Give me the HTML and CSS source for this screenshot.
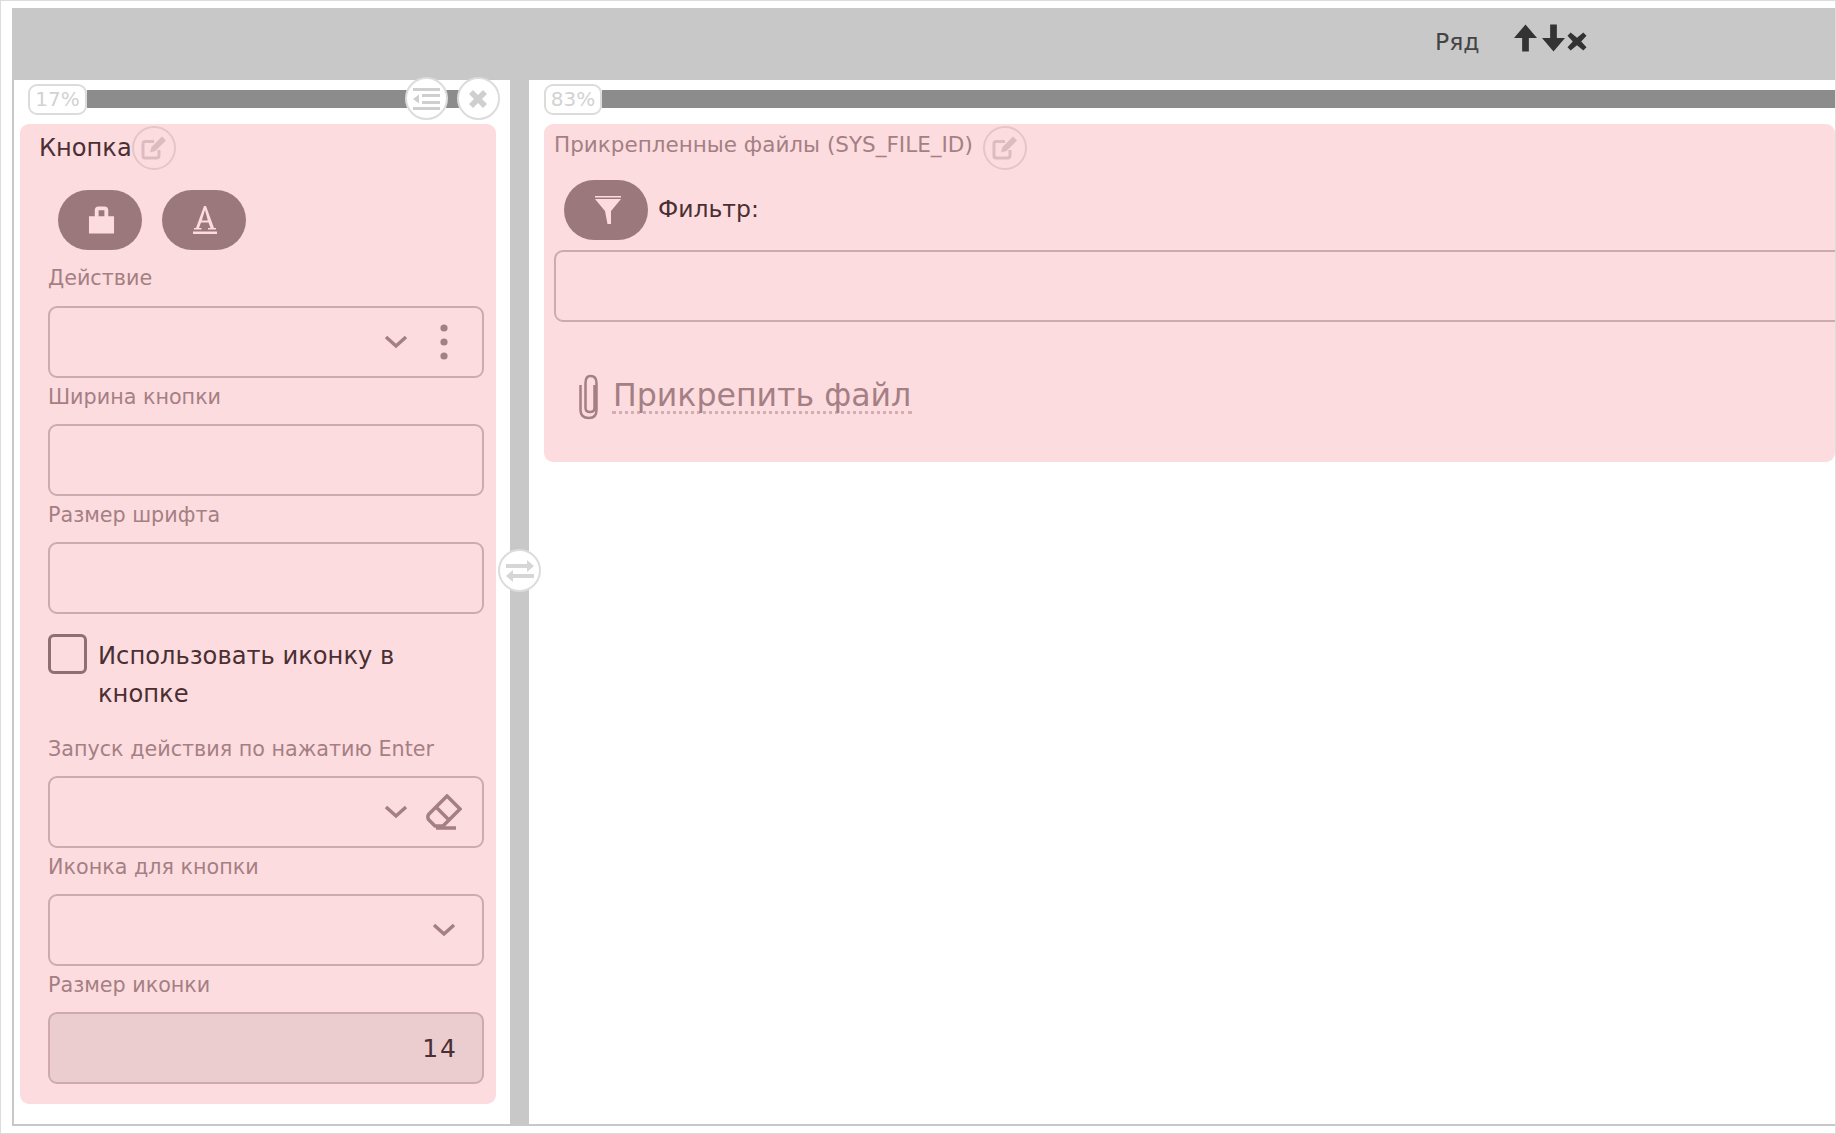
FILE: index.html
```html
<!DOCTYPE html>
<html lang="ru">
<head>
<meta charset="utf-8">
<title>Ряд</title>
<link rel="stylesheet" href="styles.css">
</head>
<body>
<div class="frame">
  <header class="rowbar">
    <span class="rowbar-label">Ряд</span>
    <span class="rowbar-icons">
      <svg class="ic-arrow" viewBox="0 0 24 28"><path d="M12 0L24 14H15.500V28H8.500V14H0Z"/></svg>
      <svg class="ic-arrow" viewBox="0 0 24 28"><path d="M8.500 0H15.500V14H24L12 28L0 14H8.500Z"/></svg>
      <svg class="ic-x" viewBox="0 0 22 18"><path d="M2 3.500L5 0.500L11 5.500L17 0.500L20 3.500L15 9L20 14.500L17 17.500L11 12.500L5 17.500L2 14.500L7 9Z"/></svg>
    </span>
  </header>
  <div class="columns">
    <section class="col col-left">
      <div class="track track-left">
        <span class="badge">17%</span>
        <span class="line"></span>
        <span class="round round-list">
          <svg viewBox="0 0 28 24"><path d="M1 1H28V4H1ZM10 7H28V10H10ZM10 14H28V17H10ZM1 20H28V23H1ZM7 7.500V16.500L1 12Z"/></svg>
        </span>
        <span class="round round-x">
          <svg viewBox="0 0 20 20"><path d="M1 5L5 1L10 6L15 1L19 5L14 10L19 15L15 19L10 14L5 19L1 15L6 10Z"/></svg>
        </span>
      </div>
      <div class="card card-left">
        <div class="title-row">
          <span class="title">Кнопка</span>
          <span class="edit"><svg viewBox="0 0 26 24"><path class="edit-box" d="M18 14V19.500Q18 22 15.500 22H4Q2 22 2 20V8Q2 5.500 4 5.500H13"/><path class="edit-pen" d="M21 0.500L25 4.500L14.500 15L9 16.500L10.500 11Z"/></svg></span>
        </div>
        <div class="btn-row">
          <span class="pill"><svg class="ic-lock" viewBox="0 0 28 28"><path fill-rule="evenodd" d="M1 10H7V4Q7 0 11 0H17Q21 0 21 4V10H27V28H1ZM11 4H17V10H11Z"/></svg></span>
          <span class="pill"><svg class="ic-a" viewBox="0 0 28 28"><path d="M13 0H15L23 22H25V23.500H17V22H19.500L17.500 16.500H10L8 22H10.500V23.500H3V22H5ZM14 4L10.800 14.500H16.800ZM2 25.500H26V28H2Z"/></svg></span>
        </div>
        <label class="lbl lbl-first">Действие</label>
        <div class="field">
          <svg class="chev chev-dots" viewBox="0 0 24 14"><path d="M2 2L12 11L22 2"/></svg>
          <svg class="dots" viewBox="0 0 8 36"><circle cx="4" cy="4" r="3.600"/><circle cx="4" cy="18" r="3.600"/><circle cx="4" cy="32" r="3.600"/></svg>
        </div>
        <label class="lbl">Ширина кнопки</label>
        <div class="field"></div>
        <label class="lbl">Размер шрифта</label>
        <div class="field"></div>
        <div class="check">
          <span class="box"></span>
          <span class="check-text">Использовать иконку в кнопке</span>
        </div>
        <label class="lbl">Запуск действия по нажатию Enter</label>
        <div class="field">
          <svg class="chev chev-eraser" viewBox="0 0 24 14"><path d="M2 2L12 11L22 2"/></svg>
          <svg class="eraser" viewBox="0 0 36 36"><path d="M21 2L34 15L17 32H9L2.500 25.500Q1 22 3 20ZM10 13L23 26M10 34H30"/></svg>
        </div>
        <label class="lbl">Иконка для кнопки</label>
        <div class="field">
          <svg class="chev chev-solo" viewBox="0 0 24 14"><path d="M2 2L12 11L22 2"/></svg>
        </div>
        <label class="lbl">Размер иконки</label>
        <div class="field field-filled"><span class="value">14</span></div>
      </div>
    </section>
    <div class="splitter">
      <span class="round round-swap">
        <svg viewBox="0 0 30 26"><path d="M1 6H22V2L29 8L22 14V10H1ZM29 16H8V12L1 18L8 24V20H29Z"/></svg>
      </span>
    </div>
    <section class="col col-right">
      <div class="track track-right">
        <span class="badge">83%</span>
        <span class="line"></span>
      </div>
      <div class="card card-right">
        <div class="title-row title-row-right">
          <span class="lbl-title">Прикрепленные файлы (SYS_FILE_ID)</span>
          <span class="edit"><svg viewBox="0 0 26 24"><path class="edit-box" d="M18 14V19.500Q18 22 15.500 22H4Q2 22 2 20V8Q2 5.500 4 5.500H13"/><path class="edit-pen" d="M21 0.500L25 4.500L14.500 15L9 16.500L10.500 11Z"/></svg></span>
        </div>
        <div class="filter-row">
          <span class="pill"><svg class="ic-funnel" viewBox="0 0 26 28"><path d="M0 0H26V1.500H0ZM0 3H26L16 15V28H12.500L10 15Z"/></svg></span>
          <span class="filter-label">Фильтр:</span>
        </div>
        <div class="field field-wide"></div>
        <div class="attach">
          <svg class="clip" viewBox="0 0 24 46"><path d="M17 11V34Q17 38 12.500 38Q8 38 8 34V9Q8 2 13 2Q19 2 19 9L19 36Q19 44 11.500 44Q3 44 3 36V11"/></svg>
          <span class="attach-text">Прикрепить файл</span>
        </div>
      </div>
    </section>
  </div>
</div>
</body>
</html>
```
FILE: styles.css
```css
* { box-sizing: border-box; }
html, body { margin: 0; padding: 0; background: #fff; }
body { font-family: "DejaVu Sans", sans-serif; }
.frame {
  width: 1836px; height: 1134px;
  border: 1px solid #dcdcdc;
  padding: 7px 0 7px 11px;
  display: flex; flex-direction: column;
  overflow: hidden;
}
.rowbar {
  height: 72px; flex: none;
  background: #c8c8c8;
  display: flex; align-items: flex-start;
  padding: 16px 0 0 1423px;
  color: #444;
}
.rowbar-label { font-size: 23.500px; line-height: 32px; width: 79px; padding-top: 2px; }
.rowbar-icons { display: flex; align-items: flex-start; gap: 5px; }
.ic-arrow { width: 23px; height: 28px; fill: #333; }
.ic-x { width: 24px; height: 19px; fill: #333; margin: 8px 0 0 -5px; }
.columns {
  flex: 1; display: flex; min-height: 0;
  border-left: 2px solid #c8c8c8;
  border-bottom: 2px solid #c8c8c8;
}
.col { position: relative; }
.col-left { width: 496px; flex: none; padding: 0 0 0 6px; }
.col-right { flex: 1; min-width: 0; padding: 0 0 0 15px; }
.splitter { width: 19px; flex: none; background: #c8c8c8; position: relative; }
.track { height: 44px; position: relative; display: flex; align-items: center; padding-bottom: 6px; }
.track-left { margin: 0 30px 0 8px; }
.badge {
  width: 59px; height: 31px; flex: none;
  background: #fff; border: 2px solid #dcdcdc; border-radius: 9px;
  color: #d2d2d2; font-size: 20px; line-height: 27px; text-align: center;
  position: relative; z-index: 1;
}
.track-right .badge { width: 58px; }
.line { height: 18px; background: #8c8c8c; flex: 1; }
.round {
  position: absolute; width: 43px; height: 43px;
  border-radius: 50%; background: #fff; border: 2px solid #dcdcdc;
  display: flex; align-items: center; justify-content: center;
}
.round svg { fill: #cfcfcf; }
.round-list { left: 376.500px; top: -3px; }
.round-list svg { width: 28px; height: 24px; }
.round-x { left: 428.500px; top: -3px; }
.round-x svg { width: 20px; height: 20px; }
.round-swap { left: -12px; top: 469px; }
.round-swap svg { width: 30px; height: 26px; fill: #d6d6d6; }
.card { background: #fddcdf; border-radius: 9px; }
.card-left { height: 980px; width: 476px; padding: 0 12px 0 28px; }
.card-right { height: 338px; padding: 0 0 0 10px; }
.title-row { display: flex; align-items: flex-start; height: 66px; margin-left: -9px; }
.title { font-size: 24.100px; line-height: 28px; padding-top: 10px; color: #4a2f33; height: 44px; }
.edit {
  width: 44px; height: 44px; flex: none; border-radius: 50%;
  border: 2px solid #e3c6c9; display: flex; align-items: center; justify-content: center;
  margin-top: 2px;
}
.edit svg { width: 26px; height: 24px; }
.edit-box { fill: none; stroke: #dcbcc0; stroke-width: 3; }
.edit-pen { fill: #dcbcc0; }
.btn-row { display: flex; gap: 20px; padding-left: 9.500px; height: 60px; }
.pill {
  width: 84px; height: 60px; flex: none; border-radius: 30px;
  background: #9a787c; display: flex; align-items: center; justify-content: center;
}
.ic-lock { width: 27px; height: 28px; fill: #fddcdf; margin-left: 3px; }
.ic-a { width: 28px; height: 28px; fill: #fddcdf; margin-left: 2px; }
.ic-funnel { width: 26px; height: 28px; fill: #fddcdf; margin-left: 4px; }
.lbl {
  display: block; height: 46px; padding-top: 5px;
  font-size: 20.700px; line-height: 28px; color: #a47f84;
}
.lbl-first { margin-top: 9px; height: 47px; }
.field {
  height: 72px; border: 2px solid #ceaab0; border-radius: 9px;
  display: flex; align-items: center; justify-content: flex-end;
  position: relative;
}
.chev { width: 24px; height: 14px; fill: none; stroke: #a47f84; stroke-width: 3.500; }
.chev-dots { margin-right: 32px; }
.chev-eraser { margin-right: 18px; }
.chev-solo { margin-right: 26px; }
.dots { width: 8px; height: 36px; fill: #a47f84; margin-right: 34px; }
.eraser { width: 36px; height: 36px; fill: none; stroke: #a47f84; stroke-width: 3.500; margin-right: 20px; }
.field-filled { background: #ebcdd0; }
.value { font-size: 25px; color: #4a2f33; letter-spacing: 2px; margin-right: 24px; }
.check { display: flex; gap: 11px; margin-top: 20px; height: 96px; }
.box { width: 39px; height: 40px; flex: none; border: 3.500px solid #8f6f72; border-radius: 6px; }
.check-text { font-size: 24.200px; line-height: 38px; color: #4a2f33; width: 340px; padding-top: 3px; }
.lbl-title { font-size: 21.500px; line-height: 28px; color: #a47f84; padding-top: 7px; margin-right: 10px; height: 35px; }
.title-row-right { margin-left: 0; height: 56px; }
.filter-row { display: flex; gap: 10px; padding-left: 10px; height: 70px; }
.filter-label { font-size: 23.500px; line-height: 58px; color: #4a2f33; }
.field-wide { margin-right: -20px; }
.attach { display: flex; align-items: flex-start; margin-top: 52px; padding-left: 23px; }
.clip { width: 25px; height: 46px; fill: none; stroke: #a47f84; stroke-width: 2.500; }
.attach-text {
  margin: -2px 0 0 10px; font-size: 31.600px; line-height: 38px; color: #a47f84;
  padding: 3.500px 1px 0; height: 42px;
  border-bottom: 3px dotted #d2aeb3;
}
```
